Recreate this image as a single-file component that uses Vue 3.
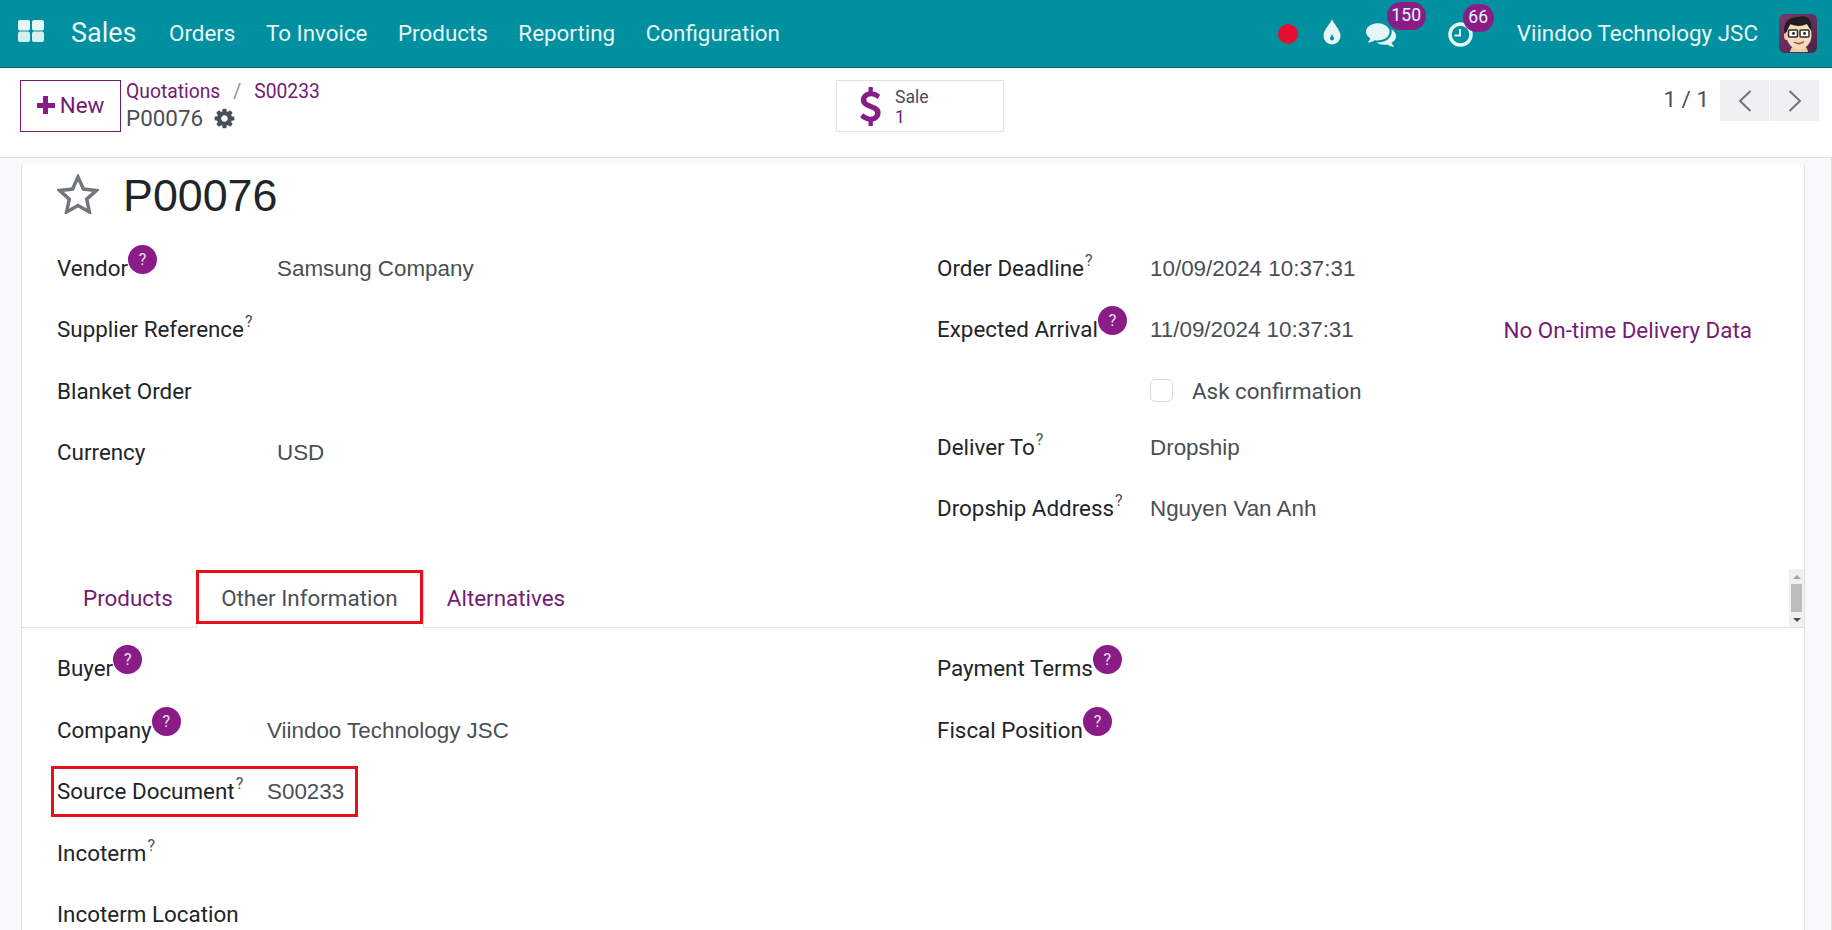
<script setup>
const menus = ['Orders', 'To Invoice', 'Products', 'Reporting', 'Configuration']
const leftRows = [
  { label: 'Vendor', help: 'badge', value: 'Samsung Company' },
  { label: 'Supplier Reference', help: 'sup', value: '' },
  { label: 'Blanket Order', help: '', value: '' },
  { label: 'Currency', help: '', value: 'USD' }
]
const buyerLeft = [
  { label: 'Buyer', help: 'badge', value: '' },
  { label: 'Company', help: 'badge', value: 'Viindoo Technology JSC' },
  { label: 'Source Document', help: 'sup', value: 'S00233', boxed: true },
  { label: 'Incoterm', help: 'sup', value: '' },
  { label: 'Incoterm Location', help: '', value: '' }
]
const buyerRight = [
  { label: 'Payment Terms', help: 'badge', value: '' },
  { label: 'Fiscal Position', help: 'badge', value: '' }
]
</script>

<template>
  <div class="app">
    <header class="nav">
      <svg class="apps" viewBox="0 0 26 22" width="26" height="22">
        <rect x="0" y="0" width="12" height="10.500" rx="2" fill="#e6f6f7" />
        <rect x="14" y="0" width="12" height="10.500" rx="2" fill="#e6f6f7" />
        <rect x="0" y="11.500" width="12" height="10.500" rx="2" fill="#d4f0f2" />
        <rect x="14" y="11.500" width="12" height="10.500" rx="2" fill="#d4f0f2" />
      </svg>
      <span class="brand">Sales</span>
      <nav class="menu">
        <a v-for="m in menus" :key="m" class="menu-item">{{ m }}</a>
      </nav>
      <div class="spacer"></div>
      <span class="rec"></span>
      <svg class="drop" viewBox="0 0 18 26" width="18" height="26">
        <path d="M9 0c1.500 5 8.500 10.500 8.500 17a8.500 8.500 0 0 1-17 0C.5 10.500 7.500 5 9 0z" fill="#e6f6f7" />
        <path d="M9 15c.6 2 2 3 2 4.500a2 2 0 0 1-4 0C7 18 8.400 17 9 15z" fill="#00909f" />
      </svg>
      <span class="sys sys-chat">
        <svg viewBox="0 0 1792 1792" width="30" height="30">
          <path fill="#e6f6f7" d="M1408 768q0 139-94 257t-256.500 186.500-353.500 68.500q-86 0-176-16-124 88-278 128-36 9-86 16h-3q-11 0-20.500-8t-11.500-21q-1-3-1-6.500t.5-6.500 2-6l2.500-5 3.500-5.500 4-5 4.500-5 4-4.500q5-6 23-25t26-29.500 22.500-29 25-38.500 20.500-44q-124-72-195-177t-71-224q0-139 94-257t256.500-186.500 353.500-68.500 353.500 68.500 256.500 186.500 94 257zm384 256q0 120-71 224.500t-195 176.500q10 24 20.500 44t25 38.500 22.500 29 26 29.500 23 25q1 1 4 4.500t4.500 5 4 5 3.500 5.500l2.500 5 2 6 .5 6.500-1 6.500q-3 14-13 22t-22 7q-50-7-86-16-154-40-278-128-90 16-176 16-271 0-472-132 58 4 88 4 161 0 309-45t264-129q125-92 192-212t67-254q0-77-23-152 129 71 204 178t75 230z" />
        </svg>
        <span class="count count-chat">150</span>
      </span>
      <span class="sys sys-clock">
        <svg viewBox="0 0 26 26" width="26" height="26">
          <circle cx="12.500" cy="13.500" r="10.500" fill="none" stroke="#e6f6f7" stroke-width="3.500" />
          <path d="M12 8v6.500H6.500" fill="none" stroke="#e6f6f7" stroke-width="2" />
        </svg>
        <span class="count count-clock">66</span>
      </span>
      <span class="company">Viindoo Technology JSC</span>
      <svg class="avatar" viewBox="0 0 38 39" width="38" height="39">
        <defs>
          <linearGradient id="avatar-bg" x1="0" y1="0" x2="1" y2="1">
            <stop offset="0" stop-color="#7a3a6e" />
            <stop offset="1" stop-color="#4c2146" />
          </linearGradient>
        </defs>
        <rect width="38" height="39" rx="6" fill="url(#avatar-bg)" />
        <path d="M11 38c1-6 5-8 9-8s8 2 9 8z" fill="#e8c9a8" />
        <ellipse cx="7.500" cy="22" rx="2.500" ry="4" fill="#eec3a2" />
        <ellipse cx="20" cy="21" rx="12.500" ry="14.500" fill="#f7d9bd" />
        <path d="M6 20C3 9 10 3 19 3c3-1 7-1 10 1 3 3 4 8 3 12-2-2-3-4-4-6-6 3-13 2-17 0-1 3-3 6-5 10z" fill="#1f1b20" />
        <rect x="9.500" y="16" width="9" height="7" rx="1" fill="#fdfaf5" stroke="#2a2a2a" stroke-width="1.500" />
        <rect x="21" y="16" width="9" height="7" rx="1" fill="#fdfaf5" stroke="#2a2a2a" stroke-width="1.500" />
        <circle cx="14.500" cy="19.500" r="1.400" fill="#222" />
        <circle cx="25.500" cy="19.500" r="1.400" fill="#222" />
        <path d="M15 28c3 2 7 2 10-.5" fill="none" stroke="#9b5338" stroke-width="1.500" />
      </svg>
    </header>

    <section class="cp">
      <div class="cp-left">
        <button class="new-btn"><span class="plus"></span><span class="new-text">New</span></button>
        <div class="crumbs">
          <div class="crumb-line">
            <a class="link">Quotations</a><span class="slash">/</span><a class="link">S00233</a>
          </div>
          <div class="crumb-cur">
            P00076
            <svg class="gear" viewBox="0 0 1792 1792" width="23" height="23">
              <path fill="#4a4f55" d="M1152 896q0-106-75-181t-181-75-181 75-75 181 75 181 181 75 181-75 75-181zm512-109v222q0 12-8 23t-20 13l-185 28q-19 54-39 91 35 50 107 138 10 12 10 25t-9 23q-27 37-99 108t-94 71q-12 0-26-9l-138-108q-44 23-91 38-16 136-29 186-7 28-36 28h-222q-14 0-24.500-8.500t-11.500-21.500l-28-184q-49-16-90-37l-141 107q-10 9-25 9-14 0-25-11-126-114-165-168-7-10-7-23 0-12 8-23 15-21 51-66.500t54-70.500q-27-50-41-99l-183-27q-13-2-21-12.500t-8-23.500v-222q0-12 8-23t19-13l186-28q14-46 39-92-40-57-107-138-10-12-10-24 0-10 9-23 26-36 98.500-107.500t94.500-71.500q13 0 26 10l138 107q44-23 91-38 16-136 29-186 7-28 36-28h222q14 0 24.500 8.500t11.500 21.500l28 184q49 16 90 37l142-107q9-9 24-9 13 0 25 10 129 119 165 170 7 8 7 22 0 12-8 23-15 21-51 66.500t-54 70.500q26 50 41 98l183 28q13 2 21 12.500t8 23.500z" />
            </svg>
          </div>
        </div>
      </div>
      <div class="stat">
        <svg class="stat-icon" viewBox="0 0 1792 1792" width="39" height="39">
          <path fill="#8a1c87" d="M1362 1185q0 153-99.500 263.500t-258.500 136.500v175q0 14-9 23t-23 9h-135q-13 0-22.500-9.500t-9.500-22.500v-175q-66-9-127.500-31t-101.500-44.500-74-48-46.500-37.500-17.500-18q-17-21-2-41l103-135q7-10 23-12 15-2 24 9l2 2q113 99 243 125 37 8 74 8 81 0 142.500-43t61.500-122q0-28-15-53t-33.500-42-58.500-37.500-66-32-80-32.500q-39-16-61.500-25t-61.500-26.500-62.500-31-56.500-35.500-53.500-42.500-43.500-49-35.500-58-21-66.500-8.500-78q0-138 98-242t255-134v-180q0-13 9.500-22.500t22.500-9.500h135q14 0 23 9t9 23v176q57 6 110.500 23t87 33.500 63.500 37.500 39 29 15 14q17 18 5 38l-81 146q-8 15-23 16-14 3-27-7-3-3-14.500-12t-39-26.500-58.500-32-74.500-26-85.500-11.500q-95 0-155 43t-60 111q0 26 8.500 48t29.500 41.500 39.500 33 56 31 60.500 27 70 27.500q53 20 81 31.500t76 35 75.500 42.500 62 50 53 63.500 31.500 76.500 13 94z" />
        </svg>
        <span class="stat-text">
          <span class="stat-label">Sale</span>
          <span class="stat-val">1</span>
        </span>
      </div>
      <div class="spacer"></div>
      <div class="pager">
        <span class="pager-text">1 / 1</span>
        <span class="pager-btn">
          <svg viewBox="0 0 14 24" width="14" height="24"><path d="M12.500 2 2 12l10.500 10" fill="none" stroke="#6f7479" stroke-width="2" /></svg>
        </span>
        <span class="pager-btn">
          <svg viewBox="0 0 14 24" width="14" height="24"><path d="M1.500 2 12 12 1.500 22" fill="none" stroke="#6f7479" stroke-width="2" /></svg>
        </span>
      </div>
    </section>

    <main class="content">
      <div class="sheet">
        <div class="title">
          <svg class="star" viewBox="0 0 42 40" width="42" height="40">
            <path d="M21 3l5.400 12 13 1.400-9.700 8.800 2.700 12.800L21 31.500 9.600 38l2.700-12.800-9.700-8.800 13-1.400z" fill="none" stroke="#71767b" stroke-width="3.500" stroke-linejoin="miter" />
          </svg>
          <h1 class="name">P00076</h1>
        </div>

        <div class="cols">
          <div class="col">
            <div v-for="r in leftRows" :key="r.label" class="row row-left">
              <span class="label">{{ r.label }}<sup v-if="r.help === 'sup'" class="q">?</sup><span v-if="r.help === 'badge'" class="help">?</span></span>
              <span class="value">{{ r.value }}</span>
            </div>
          </div>
          <div class="col">
            <div class="row row-right">
              <span class="label">Order Deadline<sup class="q">?</sup></span>
              <span class="value">10/09/2024 10:37:31</span>
            </div>
            <div class="row row-right">
              <span class="label">Expected Arrival<span class="help">?</span></span>
              <span class="value">11/09/2024 10:37:31</span>
              <a class="link ontime">No On-time Delivery Data</a>
            </div>
            <div class="row row-right">
              <span class="label"></span>
              <span class="check"></span>
              <span class="check-label">Ask confirmation</span>
            </div>
            <div class="row row-right row-short">
              <span class="label">Deliver To<sup class="q">?</sup></span>
              <span class="value">Dropship</span>
            </div>
            <div class="row row-right row-tall">
              <span class="label">Dropship Address<sup class="q">?</sup></span>
              <span class="value">Nguyen Van Anh</span>
            </div>
          </div>
        </div>

        <div class="tabs">
          <a class="tab tab-first link">Products</a>
          <span class="tab tab-active"><span class="tab-box">Other Information</span></span>
          <a class="tab tab-last link">Alternatives</a>
          <div class="scroll">
            <span class="arrow arrow-up"></span>
            <span class="thumb"></span>
            <span class="arrow arrow-down"></span>
          </div>
        </div>

        <div class="cols cols-page">
          <div class="col">
            <div v-for="r in buyerLeft" :key="r.label" class="row row-page" :class="{ boxed: r.boxed }">
              <span class="label label-page">{{ r.label }}<sup v-if="r.help === 'sup'" class="q">?</sup><span v-if="r.help === 'badge'" class="help">?</span></span>
              <span class="value">{{ r.value }}</span>
            </div>
          </div>
          <div class="col">
            <div v-for="r in buyerRight" :key="r.label" class="row row-page">
              <span class="label">{{ r.label }}<span class="help">?</span></span>
            </div>
          </div>
        </div>
      </div>
    </main>
  </div>
</template>

<style>
html, body { margin: 0; background: #fff; }
</style>

<style scoped>
.app {
  width: 1832px;
  height: 930px;
  display: flex;
  flex-direction: column;
  overflow: hidden;
  font-family: Roboto, "Liberation Sans", sans-serif;
  font-size: 22.400px;
  color: #212529;
  background: #f8f9fa;
}
.spacer { flex: 1; }
.link { color: #741b73; }

.nav {
  flex: none;
  height: 67px;
  border-bottom: 1px solid #05606b;
  background: #00909f;
  color: #e6f6f7;
  display: flex;
  align-items: center;
  padding: 0 15px 0 18px;
}
.apps { flex: none; margin-bottom: 6px; }
.brand { font-size: 27px; margin-left: 27px; width: 98px; margin-bottom: 2px; }
.menu { display: flex; gap: 30.500px; margin-bottom: 2px; }
.rec {
  width: 20px;
  height: 20px;
  border-radius: 50%;
  background: #e20f30;
  margin-right: 25px;
}
.drop { margin-right: 25px; margin-bottom: 4px; }
.sys { position: relative; display: flex; }
.sys-chat { margin-right: 52px; }
.sys-clock { margin-right: 43px; }
.count {
  position: absolute;
  top: -17px;
  height: 28px;
  border-radius: 14px;
  background: #8a1c87;
  color: #e6f6f7;
  font-size: 17.600px;
  line-height: 26px;
  text-align: center;
}
.count-chat { left: 21px; width: 39px; }
.count-clock { left: 15px; width: 31px; }
.company { margin-right: 21px; margin-bottom: 2px; }
.avatar { flex: none; }

.cp {
  flex: none;
  height: 90px;
  box-sizing: border-box;
  border-bottom: 1px solid #dee2e6;
  background: #fff;
  display: flex;
  align-items: flex-start;
  padding: 12px 12px 0 20px;
}
.cp-left { width: 816px; display: flex; flex: none; }
.new-btn {
  width: 101px;
  height: 52px;
  border: 1px solid #741b73;
  background: #fff;
  color: #741b73;
  font: inherit;
  padding: 0;
  display: flex;
  align-items: center;
  justify-content: center;
  gap: 5px;
}
.new-text { margin-bottom: 2px; }
.plus {
  width: 18px;
  height: 18px;
  margin-bottom: 2px;
  background:
    linear-gradient(#8a1c87, #8a1c87) center / 100% 5px no-repeat,
    linear-gradient(#8a1c87, #8a1c87) center / 5px 100% no-repeat;
  border-radius: 2px;
}
.crumbs { margin-left: 5px; margin-top: -3px; }
.crumb-line { height: 27px; line-height: 30px; font-size: 19.300px; }
.slash { color: #8b9095; margin: 0 13px; }
.crumb-cur {
  height: 28px;
  line-height: 28px;
  color: #4a4f55;
  display: flex;
  align-items: center;
  gap: 10px;
}
.stat {
  width: 168px;
  height: 52px;
  box-sizing: border-box;
  border: 1px solid #dee2e6;
  display: flex;
  align-items: center;
  padding-left: 14px;
}
.stat-icon { flex: none; margin-right: 5px; }
.stat-text { display: flex; flex-direction: column; line-height: 20px; padding-top: 1px; }
.stat-label { font-size: 17.600px; color: #4a4f55; }
.stat-val { font-size: 17.600px; color: #741b73; }
.pager { display: flex; align-items: center; height: 41px; }
.pager-text { margin-right: 11px; margin-bottom: 3px; color: #4a4f55; }
.pager-btn {
  width: 49px;
  height: 41px;
  background: #eff0f1;
  margin-right: 1px;
  display: flex;
  align-items: center;
  justify-content: center;
}

.content {
  flex: 1;
  min-height: 0;
  padding: 7px 26px 0 21px;
  border-right: 1px solid #dee2e6;
  display: flex;
}
.sheet {
  flex: 1;
  box-sizing: border-box;
  background: #fff;
  border-left: 1px solid #dee2e6;
  border-right: 1px solid #dee2e6;
}
.title {
  height: 72px;
  display: flex;
  align-items: center;
  padding: 0 0 12px 35px;
  box-sizing: border-box;
}
.star { flex: none; margin-bottom: 2px; }
.name {
  margin: 0 0 0 24px;
  font-family: "Liberation Sans", Arial, sans-serif;
  font-size: 44.800px;
  font-weight: 400;
  color: #212529;
}
.cols { display: grid; grid-template-columns: 880px 1fr; padding-left: 35px; }
.row { display: flex; align-items: center; height: 61.500px; white-space: nowrap; }
.row-short { height: 51px; }
.row-tall { height: 71px; }
.label { flex: none; display: flex; align-items: flex-start; line-height: 30px; }
.row-left .label { width: 220px; }
.row-right .label { width: 213px; }
.label-page { width: 210px; }
.value {
  font-family: "Liberation Sans", Arial, sans-serif;
  color: #4a4f55;
  padding-top: 2px;
}
.check-label { color: #4a4f55; }
.q { font-size: 16px; line-height: 16px; color: #4a4f55; margin-left: 1px; }
.help {
  width: 29px;
  height: 29px;
  border-radius: 50%;
  background: #8a1c87;
  color: #efe3ef;
  font-size: 16px;
  line-height: 29px;
  text-align: center;
  margin-top: -8px;
}
.ontime { margin-left: auto; margin-right: 52px; padding-top: 2px; }
.check {
  width: 23px;
  height: 23px;
  box-sizing: border-box;
  border: 1px solid #d5d8dc;
  border-radius: 5px;
  margin-right: 19px;
}
.tabs {
  position: relative;
  margin-top: 26px;
  height: 58px;
  box-sizing: border-box;
  border-bottom: 1px solid #dee2e6;
  padding-left: 37px;
  display: flex;
  align-items: flex-start;
}
.tab {
  height: 54px;
  line-height: 56px;
}
.tab-first { padding: 0 23px 0 24px; }
.tab-last { padding: 0 23px; }
.tab-active {
  height: 58px;
  box-sizing: border-box;
  background: #fff;
  border-left: 1px solid #dee2e6;
  border-right: 1px solid #dee2e6;
  color: #4a4f55;
}
.tab-box {
  display: block;
  box-sizing: border-box;
  width: 227px;
  margin-left: -1px;
  height: 54px;
  line-height: 50px;
  text-align: center;
  border: 3px solid #e8111b;
}
.scroll {
  position: absolute;
  right: 0;
  top: -1px;
  bottom: 0;
  width: 15px;
  background: #f1f1f1;
  display: flex;
  flex-direction: column;
  align-items: center;
  justify-content: space-between;
}
.thumb { width: 11px; height: 29px; background: #bcbcbc; }
.arrow { width: 0; height: 0; border-left: 4px solid transparent; border-right: 4px solid transparent; margin: 6px 0 5px; }
.arrow-up { border-bottom: 4px solid #a3a3a3; }
.arrow-down { border-top: 4px solid #505050; }
.cols-page { margin-top: 10px; }
.row-page { height: 61.500px; }
.boxed {
  box-sizing: border-box;
  width: 307px;
  height: 51px;
  margin: 5px 0 5.500px -6px;
  padding-left: 3px;
  border: 3px solid #e8111b;
}
</style>
